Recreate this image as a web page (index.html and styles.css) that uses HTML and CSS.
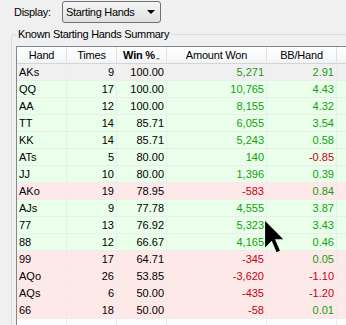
FILE: index.html
```html
<!DOCTYPE html>
<html lang="en">
<head>
  <meta charset="UTF-8" />
  <title>Starting Hands</title>
  <link rel="stylesheet" href="styles.css">
</head>
<body>
  <div class="toolbar">
    <span class="label">Display:</span>
    <div class="combo">
      <span>Starting Hands</span>
      <span class="combo-arrow"></span>
    </div>
  </div>

  <fieldset class="group">
    <legend>Known Starting Hands Summary</legend>

    <div class="grid">
      <div class="row head">
        <div class="c">Hand</div>
        <div class="c">Times</div>
        <div class="c sorted">Win %<span class="sort"></span></div>
        <div class="c">Amount Won</div>
        <div class="c">BB/Hand</div>
        <div class="c"></div>
      </div>

      <div class="row current">
        <div class="c">AKs</div><div class="c n">9</div><div class="c n">100.00</div>
        <div class="c n up">5,271</div><div class="c n up">2.91</div><div class="c"></div>
      </div>
      <div class="row win">
        <div class="c">QQ</div><div class="c n">17</div><div class="c n">100.00</div>
        <div class="c n up">10,765</div><div class="c n up">4.43</div><div class="c"></div>
      </div>
      <div class="row win">
        <div class="c">AA</div><div class="c n">12</div><div class="c n">100.00</div>
        <div class="c n up">8,155</div><div class="c n up">4.32</div><div class="c"></div>
      </div>
      <div class="row win">
        <div class="c">TT</div><div class="c n">14</div><div class="c n">85.71</div>
        <div class="c n up">6,055</div><div class="c n up">3.54</div><div class="c"></div>
      </div>
      <div class="row win">
        <div class="c">KK</div><div class="c n">14</div><div class="c n">85.71</div>
        <div class="c n up">5,243</div><div class="c n up">0.58</div><div class="c"></div>
      </div>
      <div class="row win">
        <div class="c">ATs</div><div class="c n">5</div><div class="c n">80.00</div>
        <div class="c n up">140</div><div class="c n down">-0.85</div><div class="c"></div>
      </div>
      <div class="row win">
        <div class="c">JJ</div><div class="c n">10</div><div class="c n">80.00</div>
        <div class="c n up">1,396</div><div class="c n up">0.39</div><div class="c"></div>
      </div>
      <div class="row loss">
        <div class="c">AKo</div><div class="c n">19</div><div class="c n">78.95</div>
        <div class="c n down">-583</div><div class="c n up">0.84</div><div class="c"></div>
      </div>
      <div class="row win">
        <div class="c">AJs</div><div class="c n">9</div><div class="c n">77.78</div>
        <div class="c n up">4,555</div><div class="c n up">3.87</div><div class="c"></div>
      </div>
      <div class="row win">
        <div class="c">77</div><div class="c n">13</div><div class="c n">76.92</div>
        <div class="c n up">5,323</div><div class="c n up">3.43</div><div class="c"></div>
      </div>
      <div class="row win">
        <div class="c">88</div><div class="c n">12</div><div class="c n">66.67</div>
        <div class="c n up">4,165</div><div class="c n up">0.46</div><div class="c"></div>
      </div>
      <div class="row loss">
        <div class="c">99</div><div class="c n">17</div><div class="c n">64.71</div>
        <div class="c n down">-345</div><div class="c n up">0.05</div><div class="c"></div>
      </div>
      <div class="row loss">
        <div class="c">AQo</div><div class="c n">26</div><div class="c n">53.85</div>
        <div class="c n down">-3,620</div><div class="c n down">-1.10</div><div class="c"></div>
      </div>
      <div class="row loss">
        <div class="c">AQs</div><div class="c n">6</div><div class="c n">50.00</div>
        <div class="c n down">-435</div><div class="c n down">-1.20</div><div class="c"></div>
      </div>
      <div class="row loss">
        <div class="c">66</div><div class="c n">18</div><div class="c n">50.00</div>
        <div class="c n down">-58</div><div class="c n up">0.01</div><div class="c"></div>
      </div>
      <div class="row blank">
        <div class="c"></div><div class="c"></div><div class="c"></div>
        <div class="c"></div><div class="c"></div><div class="c"></div>
      </div>
    </div>
  </fieldset>

  <!-- mouse pointer caught in the screenshot -->
  <svg class="pointer" width="20" height="33" viewBox="0 0 12 20">
    <path d="M0 0 L0 16 L4 12 L7 19 L9 18 L6 11 L11 11 Z" fill="#000"/>
  </svg>
</body>
</html>
```

FILE: styles.css
```css
body {
  margin: 0;
  height: 325px;
  overflow: hidden;
  background: #f0f0f0;
  font-family: "Liberation Sans", Arial, sans-serif;
  font-size: 11px;
  color: #000;
}

/* Display combo */
.toolbar {
  display: flex;
  align-items: center;
  height: 24px;
  padding-left: 14px;
}
.label {
  width: 48px;
  letter-spacing: -0.3px;
}
.combo {
  display: flex;
  align-items: center;
  justify-content: space-between;
  box-sizing: border-box;
  width: 99px;
  height: 22px;
  padding: 0 5px 0 3px;
  border: 1px solid #707070;
  border-radius: 3px;
  background: linear-gradient(#f5f5f5, #ebebeb 50%, #e0e0e0);
  letter-spacing: -0.3px;
}
.combo-arrow {
  width: 0;
  height: 0;
  border-left: 4px solid transparent;
  border-right: 4px solid transparent;
  border-top: 4px solid #000;
}

/* Group box */
.group {
  margin: 4px 0 0 11px;
  padding: 5px 0 0 4px;
  width: 400px;
  border: 1px solid #d5dfe5;
  border-radius: 3px;
}
.group legend {
  padding: 0 2px;
  line-height: 13px;
  letter-spacing: -0.3px;
}

/* Grid */
.grid {
  border-left: 1px solid #828790;
  border-top: 1px solid #828790;
  background: #fff;
}
.row {
  display: grid;
  grid-template-columns: 50px 50px 50px 100px 70px 60px;
  height: 17px;
}
.c {
  box-sizing: border-box;
  padding: 0 2px;
  line-height: 16px;
  border-right: 1px solid #ececec;
  border-bottom: 1px solid #ececec;
  white-space: nowrap;
  overflow: hidden;
}
.n {
  text-align: right;
}
.head {
  background: linear-gradient(#ffffff, #f8f9fa 60%, #f1f2f4);
}
.head .c {
  text-align: center;
  letter-spacing: -0.2px;
  border-bottom-color: #d5d5d5;
  border-right-color: #dfe2e6;
}
.head .sorted {
  font-weight: bold;
}
.sort {
  display: inline-block;
  width: 0;
  height: 0;
  margin-left: 1px;
  border-left: 2px solid transparent;
  border-right: 2px solid transparent;
  border-top: 2px solid #6e7c8c;
  vertical-align: -1px;
}

.current { background: #f0f0f0; }
.win { background: #eaffea; }
.loss { background: #ffe8e8; }
.blank { background: #fdfdfd; }

.up { color: #12a012; }
.down { color: #c40018; }

.pointer {
  position: absolute;
  left: 265px;
  top: 221px;
}
```
